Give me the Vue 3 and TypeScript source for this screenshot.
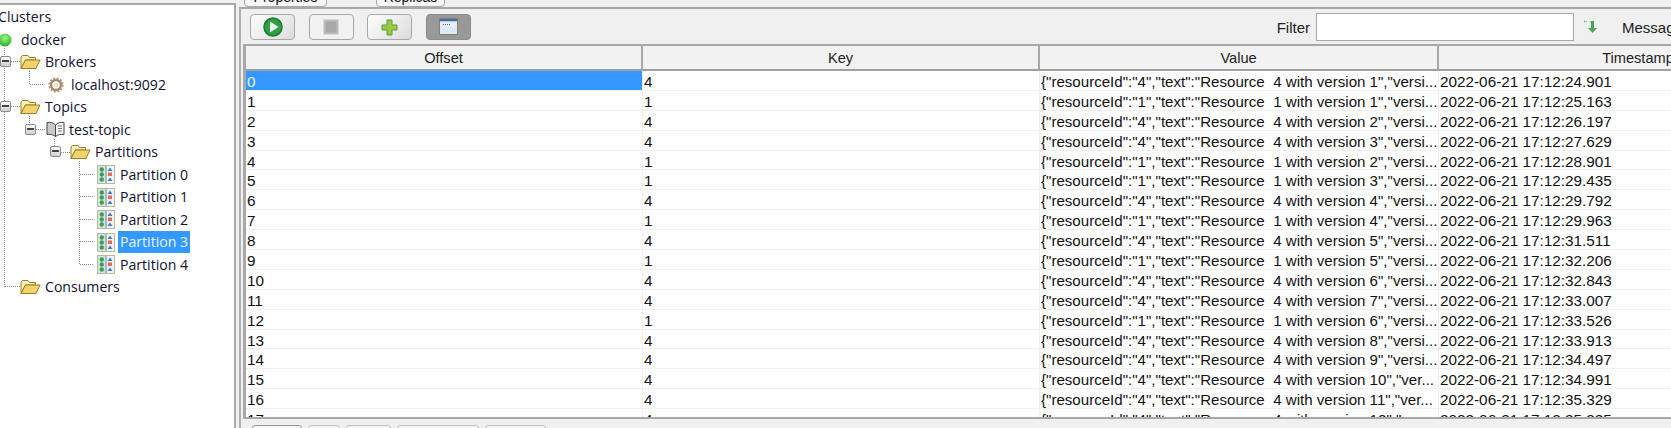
<script setup lang="ts">
type Kind = 'none' | 'ball' | 'folder' | 'gear' | 'book' | 'part'
interface Node { label: string; x: number; kind: Kind; box?: number; selected?: boolean }

const nodes: Node[] = [
  { label: 'Clusters', x: -4, kind: 'none' },
  { label: 'docker', x: -2, kind: 'ball' },
  { label: 'Brokers', x: 20, kind: 'folder', box: 5 },
  { label: 'localhost:9092', x: 48, kind: 'gear' },
  { label: 'Topics', x: 20, kind: 'folder', box: 5 },
  { label: 'test-topic', x: 46, kind: 'book', box: 30 },
  { label: 'Partitions', x: 70, kind: 'folder', box: 55 },
  { label: 'Partition 0', x: 97, kind: 'part' },
  { label: 'Partition 1', x: 97, kind: 'part' },
  { label: 'Partition 2', x: 97, kind: 'part' },
  { label: 'Partition 3', x: 97, kind: 'part', selected: true },
  { label: 'Partition 4', x: 97, kind: 'part' },
  { label: 'Consumers', x: 20, kind: 'folder' },
]

const seed: [string, string, number, string][] = [
  ['0', '4', 1, '24.901'], ['1', '1', 1, '25.163'], ['2', '4', 2, '26.197'],
  ['3', '4', 3, '27.629'], ['4', '1', 2, '28.901'], ['5', '1', 3, '29.435'],
  ['6', '4', 4, '29.792'], ['7', '1', 4, '29.963'], ['8', '4', 5, '31.511'],
  ['9', '1', 5, '32.206'], ['10', '4', 6, '32.843'], ['11', '4', 7, '33.007'],
  ['12', '1', 6, '33.526'], ['13', '4', 8, '33.913'], ['14', '4', 9, '34.497'],
  ['15', '4', 10, '34.991'], ['16', '4', 11, '35.329'], ['17', '4', 12, '35.335'],
]
const rows = seed.map(([offset, key, ver, ts]) => ({
  offset,
  key,
  value: `{"resourceId":"${key}","text":"Resource  ${key} with version ${ver}",` + (ver >= 10 ? '"ver...' : '"versi...'),
  ts: `2022-06-21 17:12:${ts}`,
}))
const bottomTabs = [50, 32, 45, 82, 61]
</script>

<template>
  <div class="app">
    <aside class="tree-panel">
      <div class="tree">
        <svg class="wires" width="232" height="300">
          <g stroke="#8a8a8a" stroke-width="1" stroke-dasharray="1 1" fill="none" shape-rendering="crispEdges">
            <path d="M4.5 48V287M4.5 61.5H20M4.5 106.5H20M4.5 286.5H20" />
            <path d="M29.5 71V84.5H44M29.5 116V129.5H46M54.5 139V152.5H70" />
            <path d="M79.5 161V264.5H94M79.5 174.5H94M79.5 196.5H94M79.5 219.5H94M79.5 241.5H94" />
          </g>
        </svg>
        <div v-for="n in nodes" :key="n.label" class="node" :style="{ marginLeft: n.x + 'px' }">
          <span v-if="n.box !== undefined" class="box" :style="{ left: n.box - 5 - n.x + 'px' }"></span>
          <svg v-if="n.kind === 'ball'" class="ico ball" width="14" height="14" viewBox="0 0 14 14">
            <defs><radialGradient id="ball" cx="50%" cy="35%" r="65%"><stop offset="0" stop-color="#a4f58e" /><stop offset="1" stop-color="#1fb41d" /></radialGradient></defs>
            <circle cx="7" cy="7" r="6.5" fill="url(#ball)" />
          </svg>
          <svg v-else-if="n.kind === 'folder'" class="ico" width="21" height="16" viewBox="0 0 21 16">
            <path d="M1 14.5V3L2.5 1.5H8L9.5 3.5H15.5V6H5.5L1 14.5Z" fill="#fbf0b8" stroke="#97802c" />
            <path d="M1 14.5L5.5 6H20L16 14.5Z" fill="#f0d36a" stroke="#97802c" />
          </svg>
          <svg v-else-if="n.kind === 'gear'" class="ico gear" width="16" height="16" viewBox="0 0 16 16">
            <circle cx="8" cy="8" r="5" fill="none" stroke="#a88468" stroke-width="2.4" />
            <circle cx="8" cy="8" r="6.6" fill="none" stroke="#bd9a7c" stroke-width="2" stroke-dasharray="2 1.5" />
            <circle cx="8" cy="8" r="2" fill="#eedcc2" />
          </svg>
          <svg v-else-if="n.kind === 'book'" class="ico" width="19" height="17" viewBox="0 0 19 17">
            <path d="M9.5 4C7.5 1.5 4 1 1 1.5V13.5C4 13 7 13.5 9.5 15.5Z" fill="#c9c9c9" stroke="#444" />
            <path d="M9.5 4C11.5 1.5 15 1 18 1.5V13.5C15 13 12 13.5 9.5 15.5Z" fill="#f5f5f5" stroke="#444" />
            <path d="M12 5H16M12 7.5H16M12 10H16" stroke="#777" />
          </svg>
          <svg v-else-if="n.kind === 'part'" class="ico part" width="18" height="19" viewBox="0 0 18 19">
            <rect x=".5" y=".5" width="17" height="18" fill="#eef3f6" stroke="#b9b79c" />
            <rect x="1" y="1" width="7.5" height="17" fill="#d5e8d8" />
            <path d="M9 1V18" stroke="#6f8190" />
            <circle cx="4.8" cy="4.5" r="2.2" fill="#3f9a62" /><circle cx="4.8" cy="9.5" r="2.2" fill="#3f9a62" /><circle cx="4.8" cy="14.5" r="2.2" fill="#3f9a62" />
            <path d="M13 2.5L15.5 6H10.5ZM13 12.5L15.5 16H10.5Z" fill="#3f7cc4" />
            <rect x="11" y="7.5" width="4" height="3.5" fill="#ea6a5a" />
          </svg>
          <span class="label" :class="{ sel: n.selected }">{{ n.label }}</span>
        </div>
      </div>
    </aside>

    <main class="main">
      <div class="top-tabs">
        <span class="top-tab one">Properties</span>
        <span class="top-tab two">Replicas</span>
      </div>
      <div class="pane">
        <div class="toolbar">
          <button class="tbtn">
            <svg width="22" height="22" viewBox="0 0 22 22">
              <circle cx="11" cy="11" r="9" fill="#2f9e44" stroke="#1c7a2f" stroke-width="1.5" />
              <path d="M8 5.5L16.5 11L8 16.5Z" fill="#eef8ee" />
            </svg>
          </button>
          <button class="tbtn off">
            <svg width="16" height="16" viewBox="0 0 16 16"><rect x="1.5" y="1.5" width="13" height="13" fill="#a8a8a8" stroke="#bdbdbd" stroke-width="2" /></svg>
          </button>
          <button class="tbtn">
            <svg width="17" height="17" viewBox="0 0 17 17"><path d="M6 1H11V6H16V11H11V16H6V11H1V6H6Z" fill="#9acb3c" stroke="#5d9a4a" /></svg>
          </button>
          <button class="tbtn dark">
            <svg width="20" height="20" viewBox="0 0 20 20">
              <rect x=".5" y="1.5" width="18" height="16" fill="#d6ecf7" stroke="#8a8068" />
              <rect x="1" y="2" width="17" height="2.5" fill="#3d6fae" />
              <rect x="1" y="4.5" width="17" height="6" fill="#e8eef8" />
              <path d="M4 7.5H12" stroke="#667" stroke-dasharray="1 1" />
            </svg>
          </button>
          <span class="filter-label">Filter</span>
          <input class="filter" type="text" />
          <svg class="arrow" width="16" height="16" viewBox="0 0 16 16">
            <path d="M1 2.5H4" stroke="#7fbf7f" stroke-width="2" stroke-dasharray="1.5 1" />
            <path d="M6 2H10V9H13L8.5 14L4 9H7V4Z" fill="#4ea35a" transform="translate(1 0)" />
          </svg>
          <span class="msg">Messag</span>
        </div>
        <div class="table-wrap">
          <div class="row head">
            <div class="hcell">Offset</div>
            <div class="hcell">Key</div>
            <div class="hcell">Value</div>
            <div class="hcell">Timestamp</div>
          </div>
          <div class="body">
            <div v-for="(r, i) in rows" :key="r.offset" class="row">
              <div class="cell" :class="{ selcell: i === 0 }">{{ r.offset }}</div>
              <div class="cell">{{ r.key }}</div>
              <div class="cell value">{{ r.value }}</div>
              <div class="cell">{{ r.ts }}</div>
            </div>
          </div>
        </div>
        <div class="bottom-tabs">
          <span v-for="(w, i) in bottomTabs" :key="i" class="btab" :class="{ first: i === 0 }" :style="{ width: w + 'px' }"></span>
        </div>
      </div>
    </main>
  </div>
</template>

<style scoped>
.app {
  width: 1671px;
  height: 428px;
  display: flex;
  overflow: hidden;
  background: #f0f0f0;
  font-family: "Liberation Sans", Arial, sans-serif;
  color: #111;
}
.tree-panel {
  width: 236px;
  flex: none;
  height: 428px;
  box-sizing: border-box;
  background: #fff;
  border-top: 2px solid #a8a8a8;
  border-right: 2px solid #a8a8a8;
  margin-top: 3px;
  overflow: hidden;
}
.tree {
  position: relative;
  padding-top: 1px;
  font-family: "Open Sans", sans-serif;
  font-size: 14.1px;
  color: #10102e;
}
.wires {
  position: absolute;
  left: 0;
  top: -5px;
}
.node {
  height: 22.5px;
  display: flex;
  align-items: center;
  gap: 2px;
  position: relative;
  white-space: nowrap;
}
.box {
  position: absolute;
  top: 5px;
  width: 11px;
  height: 11px;
  box-sizing: border-box;
  border: 1px solid #8a8a8a;
  border-radius: 2px;
  background: linear-gradient(#fff, #cfcfcf);
}
.box::after {
  content: "";
  position: absolute;
  left: 1px;
  right: 1px;
  top: 3px;
  height: 2px;
  background: #444;
}
.ico { flex: none; position: relative; }
.ball { margin-right: 5px; }
.gear { margin-right: 3px; }
.part { margin-right: 1px; }
.label { padding: 0 2px; line-height: 22px; }
.sel { background: #3399ff; color: #eaf4ff; }
.main {
  flex: 1;
  min-width: 0;
  display: flex;
  flex-direction: column;
  padding-left: 3px;
}
.top-tabs {
  height: 7px;
  display: flex;
  overflow: hidden;
  padding-left: 5px;
  font-size: 14px;
}
.top-tab {
  height: 20px;
  margin-top: -13px;
  box-sizing: border-box;
  border: 1px solid #a8a8a8;
  background: #f7f7f7;
  border-radius: 0 0 4px 4px;
  text-align: center;
  line-height: 18px;
}
.top-tab.one { width: 83px; }
.top-tab.two { width: 69px; margin-left: 49px; }
.pane {
  flex: 1;
  min-height: 0;
  display: flex;
  flex-direction: column;
  border-top: 2px solid #a8a8a8;
  border-left: 2px solid #b0b0b0;
}
.toolbar {
  height: 35px;
  flex: none;
  box-sizing: border-box;
  display: flex;
  align-items: center;
  padding: 1px 0 0 9px;
  position: relative;
}
.tbtn {
  width: 45px;
  height: 26px;
  margin-right: 13.7px;
  padding: 0;
  display: flex;
  align-items: center;
  justify-content: center;
  border: 1px solid #a8a8a8;
  border-radius: 4px;
  background: linear-gradient(135deg, #fdfdfd, #dcdcdc);
}
.tbtn.off { background: #f2f2f2; }
.tbtn.dark { background: #999; border-color: #8c8c8c; }
.filter-label {
  margin-left: auto;
  font-size: 15px;
  color: #222;
}
.filter {
  width: 258px;
  height: 28px;
  margin-left: 6px;
  box-sizing: border-box;
  background: #fff;
  border: 1px solid #a8a8a8;
  outline: none;
}
.arrow { margin-left: 9px; }
.msg {
  margin-left: 23px;
  margin-right: -15px;
  width: 64px;
  font-size: 15px;
  color: #222;
  white-space: nowrap;
}
.table-wrap {
  flex: 1;
  min-height: 0;
  overflow: hidden;
  border-top: 2px solid #a8a8a8;
  border-left: 3px solid #a8a8a8;
  border-bottom: 2px solid #a8a8a8;
  margin-left: 2px;
  background: #fff;
  font-size: 15.3px;
}
.row {
  display: grid;
  grid-template-columns: 397px 397px 399px 400px;
  height: 19.9px;
}
.head {
  height: 23px;
  background: #f2f2f2;
  border-bottom: 2px solid #a0a0a0;
  box-sizing: content-box;
}
.hcell {
  text-align: center;
  line-height: 25px;
  border-right: 2px solid #a8a8a8;
  font-size: 14.6px;
  color: #222;
  overflow: hidden;
}
.cell {
  box-sizing: border-box;
  line-height: 21px;
  padding-left: 1px;
  border-right: 1px solid #f0f0f0;
  border-bottom: 1px solid #f0f0f0;
  white-space: pre;
  overflow: hidden;
}
.value { font-size: 15.1px; }
.selcell { background: #3399ff; color: #eaf4ff; }
.bottom-tabs {
  height: 9px;
  flex: none;
  display: flex;
  gap: 6px;
  padding: 6px 0 0 11px;
  overflow: hidden;
  box-sizing: border-box;
}
.btab {
  height: 14px;
  flex: none;
  box-sizing: border-box;
  border: 1px solid #c0c0c0;
  border-radius: 3px 3px 0 0;
  background: #f5f5f5;
}
.btab.first { border-color: #999; }
</style>

<style>
html, body { margin: 0; padding: 0; background: #f0f0f0; overflow: hidden; }
</style>
